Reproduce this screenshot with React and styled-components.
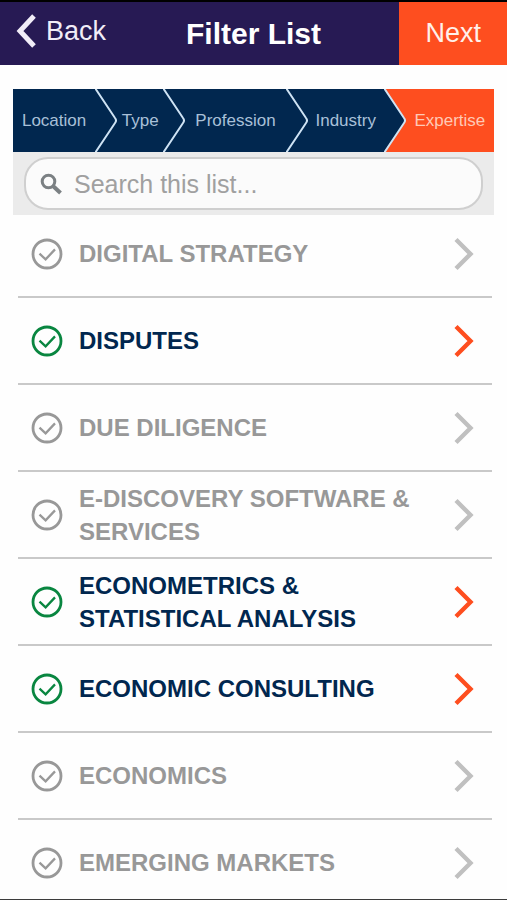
import React, { useState } from "react";
import styled, { createGlobalStyle } from "styled-components";

const colors = {
  purple: "#271a54",
  navy: "#01274f",
  orange: "#fe4e1f",
  green: "#098640",
  gray: "#989898",
  lightGray: "#c0c0c0",
  line: "#c9c9c9",
};

const steps = [
  { name: "Location", size: 104 },
  { name: "Type", size: 68 },
  { name: "Profession", size: 122 },
  { name: "Industry", size: 98 },
  { name: "Expertise", size: 88 },
];

const expertise = [
  "DIGITAL STRATEGY",
  "DISPUTES",
  "DUE DILIGENCE",
  "E-DISCOVERY SOFTWARE & SERVICES",
  "ECONOMETRICS & STATISTICAL ANALYSIS",
  "ECONOMIC CONSULTING",
  "ECONOMICS",
  "EMERGING MARKETS",
];

function Steps() {
  const current = steps.length - 1;

  return (
    <StepBar aria-label="Filter steps">
      {steps.map((step, i) => (
        <Step key={step.name} $active={i === current}>
          <StepName>{step.name}</StepName>
          {i < current && (
            <StepArrow viewBox="0 0 22 63" preserveAspectRatio="none" aria-hidden="true">
              <rect width="22" height="63" fill={i + 1 === current ? colors.orange : colors.navy} />
              <path d="M0 0 L20 29 Q22 31.5 20 34 L0 63 Z" fill={colors.navy} />
              <path d="M0 -1 L20 29 Q22 31.5 20 34 L0 64" fill="none" stroke="#cfe3f4" strokeWidth="2" />
            </StepArrow>
          )}
        </Step>
      ))}
    </StepBar>
  );
}

function ExpertiseRow({ name, checked, onToggle }) {
  return (
    <Row>
      <RowLabel $checked={checked}>
        <Tick>
          <TickInput type="checkbox" checked={checked} onChange={onToggle} />
          <svg width="32" height="32" viewBox="0 0 32 32" fill="none" stroke={checked ? colors.green : colors.gray} aria-hidden="true">
            <circle cx="16" cy="16" r="14" strokeWidth="2.8" />
            <path d="M8.5 15.7 L14.6 21.4 L24 11.4" strokeWidth="2.3" />
          </svg>
        </Tick>
        <span>{name}</span>
      </RowLabel>
      <OpenButton aria-label={"Open " + name} $checked={checked}>
        <svg width="20" height="34" viewBox="0 0 20 34" fill="none" stroke="currentColor" aria-hidden="true">
          <path d="M2 2.5 L16.5 17 L2 31.5" strokeWidth="4.4" />
        </svg>
      </OpenButton>
    </Row>
  );
}

function App() {
  const [search, setSearch] = useState("");
  const [selected, setSelected] = useState([
    "DISPUTES",
    "ECONOMETRICS & STATISTICAL ANALYSIS",
    "ECONOMIC CONSULTING",
  ]);

  const toggle = (name) => {
    setSelected(selected.includes(name) ? selected.filter((s) => s !== name) : [...selected, name]);
  };

  const visible = expertise.filter((name) => name.includes(search.toUpperCase()));

  return (
    <Screen>
      <GlobalStyle />
      <Header>
        <BackButton>
          <svg width="20" height="34" viewBox="0 0 20 34" fill="none" stroke="currentColor" aria-hidden="true">
            <path d="M18 2 L4 17 L18 32" strokeWidth="5" />
          </svg>
          Back
        </BackButton>
        <Title>Filter List</Title>
        <NextButton>Next</NextButton>
      </Header>
      <Content>
        <Steps />
        <SearchStrip>
          <SearchBox>
            <svg width="22" height="22" viewBox="0 0 22 22" fill="none" stroke="#7b8083" aria-hidden="true">
              <circle cx="8.5" cy="8.5" r="6.3" strokeWidth="3" />
              <path d="M13 13 L20.5 20" strokeWidth="4" />
            </svg>
            <SearchInput
              type="text"
              aria-label="Search this list"
              placeholder="Search this list..."
              value={search}
              onChange={(e) => setSearch(e.target.value)}
            />
          </SearchBox>
        </SearchStrip>
        <List>
          {visible.map((name) => (
            <ExpertiseRow
              key={name}
              name={name}
              checked={selected.includes(name)}
              onToggle={() => toggle(name)}
            />
          ))}
        </List>
      </Content>
    </Screen>
  );
}

const GlobalStyle = createGlobalStyle`
  * {
    box-sizing: border-box;
  }

  body {
    margin: 0;
    background: #fefefe;
    font-family: "Liberation Sans", Arial, sans-serif;
  }

  button, input {
    font-family: inherit;
  }

  svg {
    display: block;
    flex-shrink: 0;
  }
`;

const Screen = styled.div`
  display: flex;
  flex-direction: column;
  height: 100vh;
  border-top: 2px solid black;
  border-bottom: 1px solid #3c3c3c;
`;

const Header = styled.header`
  display: grid;
  grid-template-columns: 1fr auto 1fr;
  flex-shrink: 0;
  height: 63px;
  background: ${colors.purple};
  color: white;
`;

const BackButton = styled.button`
  display: flex;
  align-items: center;
  justify-self: start;
  gap: 10px;
  padding: 0 16px 5px;
  border: none;
  background: none;
  color: #f1edf8;
  font-size: 27px;
  cursor: pointer;
`;

const Title = styled.h1`
  align-self: center;
  margin: 0;
  font-size: 30px;
  line-height: 36px;
`;

const NextButton = styled.button`
  justify-self: end;
  padding: 0 26px;
  border: none;
  background: ${colors.orange};
  color: #fff0ea;
  font-size: 27px;
  cursor: pointer;
`;

const Content = styled.main`
  display: flex;
  flex-direction: column;
  flex: 1;
  min-height: 0;
  padding: 24px 13px 0;
`;

const StepBar = styled.nav`
  display: grid;
  grid-template-columns: ${steps.map((step) => step.size + "fr").join(" ")};
  flex-shrink: 0;
  height: 63px;
`;

const Step = styled.button`
  display: flex;
  align-items: stretch;
  min-width: 0;
  padding: 0;
  border: none;
  background: ${(props) => (props.$active ? colors.orange : colors.navy)};
  color: ${(props) => (props.$active ? "#ffc9b6" : "#a9c0d8")};
  font-size: 17px;
  cursor: pointer;
`;

const StepName = styled.span`
  flex: 1;
  align-self: center;
  min-width: 0;
  text-align: center;
`;

const StepArrow = styled.svg`
  width: 22px;
  height: 100%;
`;

const SearchStrip = styled.div`
  flex-shrink: 0;
  padding: 5px 11px;
  background: #ebebeb;
`;

const SearchBox = styled.label`
  display: flex;
  align-items: center;
  gap: 12px;
  height: 53px;
  padding: 0 24px 0 14px;
  border: 2px solid #cfcfcf;
  border-radius: 24px;
  background: #fbfbfb;
`;

const SearchInput = styled.input`
  flex: 1;
  min-width: 0;
  padding: 2px 0 0;
  border: none;
  outline: none;
  background: none;
  color: #555;
  font-size: 25px;

  &::placeholder {
    color: #a0a0a0;
    opacity: 1;
  }
`;

const List = styled.ul`
  flex: 1;
  min-height: 0;
  margin: -4px 2px 0 5px;
  padding: 0;
  list-style: none;
  overflow-y: auto;
  scrollbar-width: none;
`;

const Row = styled.li`
  display: flex;
  min-height: 87px;
  border-bottom: 2px solid ${colors.line};
`;

const RowLabel = styled.label`
  display: flex;
  align-items: center;
  flex: 1;
  gap: 16px;
  padding: 0 24px 0 13px;
  color: ${(props) => (props.$checked ? colors.navy : colors.gray)};
  font-size: 24px;
  font-weight: bold;
  line-height: 33px;
  cursor: pointer;
`;

const Tick = styled.span`
  position: relative;
  flex-shrink: 0;
`;

/* sits over the drawn circle so that it stays clickable */
const TickInput = styled.input`
  position: absolute;
  inset: 0;
  width: 100%;
  height: 100%;
  margin: 0;
  opacity: 0;
  cursor: pointer;
`;

const OpenButton = styled.button`
  display: flex;
  align-items: center;
  padding: 0 18px;
  border: none;
  background: none;
  color: ${(props) => (props.$checked ? colors.orange : colors.lightGray)};
  cursor: pointer;
`;

export default App;
